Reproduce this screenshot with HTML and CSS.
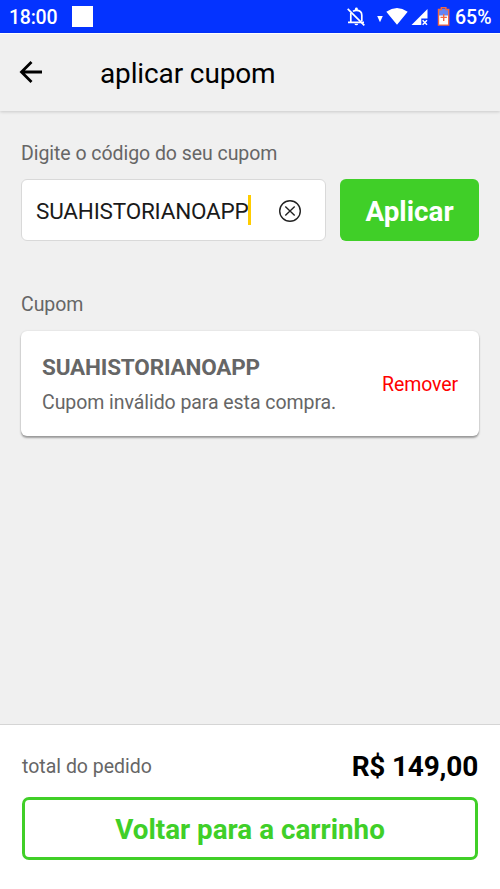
FILE: index.html
```html
<!DOCTYPE html>
<html lang="pt-BR">
<head>
<meta charset="utf-8">
<meta name="viewport" content="width=device-width">
<title>aplicar cupom</title>
<link rel="stylesheet" href="styles.css">
</head>
<body>
<div class="status">
  <span class="time">18:00</span>
  <span class="notice"></span>
  <svg class="status-icons" width="112" height="33" viewBox="340 0 112 33">
    <g fill="none" stroke="#fff" stroke-width="1.7">
      <path d="M350.8 13V22M348 22.4H364M361.8 21V15.2Q361.8 10.4 356.4 10.4Q354.4 10.4 353 11.4"/>
      <path d="M347.7 8.8L364.3 25.4"/>
    </g>
    <path fill="#fff" d="M355 10V8.8a1.4 1.4 0 0 1 2.8 0V10zM354.4 23.8h3.9a2 2 0 0 1-3.9 0zM377.2 16h5.6l-2.8 6.2zM386.3 11.7Q397 4.4 407.7 11.7L397 24.8zM411.5 25L427.5 9V18.6H421.3V25z"/>
    <path d="M422.6 20.2l4.4 4.6M427 20.2l-4.4 4.6" stroke="#fff" stroke-width="1.5"/>
    <path fill="#6485f5" d="M439 9h9v7h-9z"/>
    <path fill="#fff" d="M439 15.5h9V25h-9z"/>
    <path fill="none" stroke="#f4683f" stroke-width="1.4" d="M438.5 9.5h2.8V7.7h4.6v1.8h2.8v15.6h-10.2zM440.5 17.4h6.4M443.7 14v7"/>
  </svg>
  <span class="battery">65%</span>
</div>
<header class="header">
  <svg class="back" width="24" height="24" viewBox="0 0 24 24"><path d="M23 12H2.5M12.5 2L2.5 12L12.5 22"/></svg>
  <h1>aplicar cupom</h1>
</header>
<main class="content">
  <label class="label" for="code">Digite o código do seu cupom</label>
  <div class="form">
    <div class="field" id="code">
      <span class="value">SUAHISTORIANOAPP</span><span class="caret"></span>
      <svg class="clear" width="24" height="24" viewBox="0 0 24 24"><circle cx="12" cy="12" r="10.3"/><path d="M7.3 7.6l9.4 8.8M16.7 7.6l-9.4 8.8"/></svg>
    </div>
    <button class="apply">Aplicar</button>
  </div>
  <div class="label coupon-label">Cupom</div>
  <section class="card">
    <div>
      <div class="code">SUAHISTORIANOAPP</div>
      <div class="message">Cupom inválido para esta compra.</div>
    </div>
    <span class="remove">Remover</span>
  </section>
</main>
<footer class="footer">
  <div class="total"><span class="total-label">total do pedido</span><strong>R$ 149,00</strong></div>
  <button class="return">Voltar para a carrinho</button>
</footer>
</body>
</html>
```
FILE: styles.css
```css
* { box-sizing: border-box; }
body {
  margin: 0;
  height: 889px;
  display: flex;
  flex-direction: column;
  overflow: hidden;
  background: #f0f0f0;
  color: #000;
  font-family: Roboto, sans-serif;
}
button { font-family: inherit; padding: 0; }
svg { display: block; flex: none; }
.status {
  height: 33px;
  flex: none;
  display: flex;
  align-items: center;
  padding: 0 0 0 9px;
  background: #0433ff;
  color: #fff;
  font-size: 19.5px;
  font-weight: 500;
  line-height: 35px;
}
.time { width: 63px; padding-top: 2px; letter-spacing: -.25px; }
.notice { width: 21px; height: 21px; background: #fff; }
.status-icons { margin-left: 247px; }
.battery { margin-left: 3px; padding-top: 2px; }
.header {
  height: 78px;
  flex: none;
  display: flex;
  align-items: center;
  padding: 0 0 2px 19px;
  border-top: 1px solid #fff;
  box-shadow: 0 1px 3px rgba(0, 0, 0, .16);
}
.back { fill: none; stroke: #000; stroke-width: 2.8; }
h1 {
  margin: 4px 0 0 57px;
  font-size: 28px;
  font-weight: 400;
  line-height: 34px;
  letter-spacing: -.13px;
}
.content { flex: 1; padding: 31px 21px 0; }
.label {
  display: block;
  height: 24px;
  color: #666;
  font-size: 19.5px;
  line-height: 24px;
  letter-spacing: -.05px;
}
.form { display: flex; gap: 14px; margin-top: 13px; }
.field {
  width: 305px;
  height: 62px;
  display: flex;
  align-items: center;
  padding: 0 0 0 14px;
  background: #fff;
  border: 1px solid #d9d9d9;
  border-radius: 6px;
}
.value { width: 212px; color: #1a1a1a; font-size: 22.5px; line-height: 28px; padding-top: 2px; white-space: nowrap; letter-spacing: -.2px; }
.caret { width: 3px; height: 30px; background: #fc0; }
.clear { margin: 1px 0 0 27px; fill: none; stroke: #222; stroke-width: 1.4; }
.apply {
  width: 139px;
  height: 62px;
  padding-top: 3px;
  border: 0;
  border-radius: 6px;
  background: #40cf28;
  color: #fff;
  font-size: 27.8px;
  font-weight: 700;
}
.coupon-label { margin-top: 52px; }
.card {
  height: 105px;
  display: flex;
  align-items: center;
  justify-content: space-between;
  margin-top: 14px;
  padding: 3px 21px 0;
  background: #fff;
  border-radius: 6px;
  box-shadow: 0 2px 2px rgba(0, 0, 0, .34), 0 0 2px rgba(0, 0, 0, .12);
  color: #666;
}
.code { font-size: 22.5px; font-weight: 700; line-height: 35px; letter-spacing: -.17px; }
.message { font-size: 19.5px; line-height: 35px; letter-spacing: -.06px; }
.remove { color: #f00; font-size: 19.5px; line-height: 24px; letter-spacing: -.1px; }
.footer {
  height: 165px;
  flex: none;
  padding: 23px 22px 0;
  background: #fff;
  border-top: 1px solid #d5d5d5;
}
.total { height: 36px; display: flex; align-items: center; justify-content: space-between; }
.total-label { color: #666; font-size: 19.5px; }
.total strong { font-size: 28px; font-weight: 700; letter-spacing: -.2px; }
.return {
  display: block;
  width: 456px;
  height: 63px;
  margin-top: 13px;
  padding-top: 2px;
  background: #fff;
  border: 3px solid #40cf28;
  border-radius: 7px;
  color: #40cf28;
  font-size: 27.8px;
  font-weight: 700;
}
```
